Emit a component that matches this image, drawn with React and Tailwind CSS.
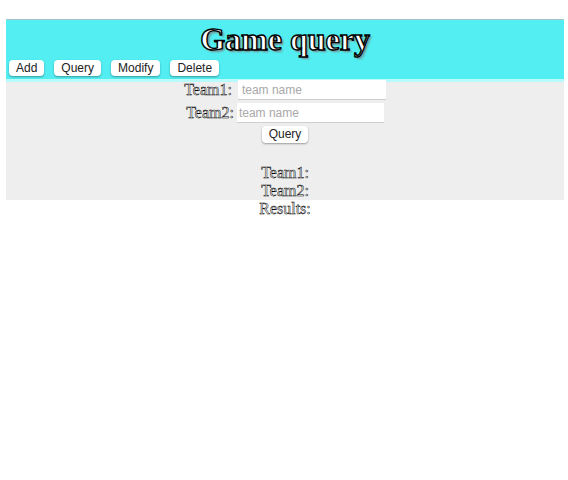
import React from "react";

const serif = { fontFamily: '"Liberation Serif", "Times New Roman", serif' };
const sans = { fontFamily: 'Helvetica, "Liberation Sans", Arial, sans-serif' };

function Btn({ children, tall }) {
  return (
    <button
      className={`${tall ? "h-[17px] leading-[17px]" : "h-[16px] leading-[16px]"} px-[7px] rounded-[4px] bg-white text-[12px] text-[#222] shadow-[0_1px_2px_rgba(0,0,0,0.35)]`}
      style={sans}
    >
      {children}
    </button>
  );
}

const outline = "shrink-0 text-white [-webkit-text-stroke:0.5px_#000]";

export default function App() {
  return (
    <div className="w-[568px] h-[480px] bg-white pt-[19px] pl-[6px] pr-[4px]">
      <div className="bg-[#52eef2] border-t border-[#a9c4c6] h-[60px] shadow-[0_3px_0_#b8fbfc] flex flex-col">
        <h1
          className="text-center text-[32px] font-bold leading-[36px] pt-[1px] text-white [-webkit-text-stroke:1.4px_#000] [text-shadow:2px_2px_2px_#7a8a8a]"
          style={serif}
        >
          Game query
        </h1>
        <div className="flex gap-[10px] pl-[3px] mt-[3px]">
          <Btn>Add</Btn>
          <Btn>Query</Btn>
          <Btn>Modify</Btn>
          <Btn>Delete</Btn>
        </div>
      </div>
      <div className="bg-[#eeeeee] mt-[3px] flex flex-col items-center">
        <div className="flex items-center gap-[6px] -mt-[2px] shrink-0">
          <span className={`text-[16px] leading-[18px] ${outline}`} style={serif}>Team1:</span>
          <input
            placeholder="team name"
            className="w-[148px] h-[20px] bg-white border-b border-[#cfcfcf] px-[4px] text-[12px] placeholder:text-[#a8a8a8] outline-none"
            style={sans}
          />
        </div>
        <div className="flex items-center gap-[3px] mt-[3px] shrink-0">
          <span className={`text-[16px] leading-[18px] ${outline}`} style={serif}>Team2:</span>
          <input
            placeholder="team name"
            className="w-[147px] h-[20px] bg-white border-b border-[#cfcfcf] px-[2px] text-[12px] placeholder:text-[#a8a8a8] outline-none"
            style={sans}
          />
        </div>
        <div className="mt-[3px] flex shrink-0">
          <Btn tall>Query</Btn>
        </div>
        <div className="mt-[21px] flex flex-col items-center shrink-0">
          <span className={`text-[16px] leading-[18px] ${outline}`} style={serif}>Team1:</span>
          <span className={`text-[16px] leading-[18px] ${outline}`} style={serif}>Team2:</span>
        </div>
      </div>
      <div className="flex justify-center">
        <span className={`text-[16px] leading-[18px] ${outline}`} style={serif}>Results:</span>
      </div>
    </div>
  );
}
